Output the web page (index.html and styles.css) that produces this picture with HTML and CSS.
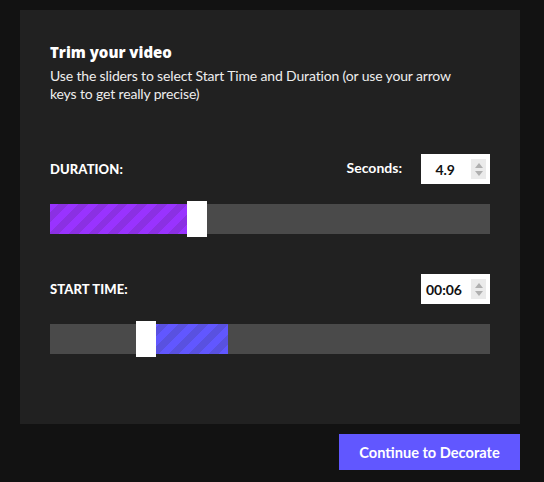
FILE: index.html
```html
<!DOCTYPE html>
<html>
<head>
<meta charset="utf-8">
<link rel="stylesheet" href="styles.css">
</head>
<body>
<div class="wrap">
  <div class="panel">
    <h1 class="title">Trim your video</h1>
    <p class="desc">Use the sliders to select Start Time and Duration (or use your arrow keys to get really precise)</p>

    <div class="section duration">
      <div class="head">
        <span class="label">DURATION:</span>
        <div class="controls">
          <span class="sub">Seconds:</span>
          <div class="num">
            <span class="val">4.9</span>
            <span class="spin"><i class="up"></i><i class="down"></i></span>
          </div>
        </div>
      </div>
      <div class="track">
        <div class="fill purple" style="left:0;width:137px"></div>
        <div class="thumb" style="left:137px"></div>
      </div>
    </div>

    <div class="section start">
      <div class="head">
        <span class="label">START TIME:</span>
        <div class="controls">
          <div class="num">
            <span class="val">00:06</span>
            <span class="spin"><i class="up"></i><i class="down"></i></span>
          </div>
        </div>
      </div>
      <div class="track">
        <div class="thumb" style="left:86px"></div>
        <div class="fill blue" style="left:106px;width:72px"></div>
      </div>
    </div>
  </div>
  <div class="actions">
    <button class="btn">Continue to Decorate</button>
  </div>
</div>
</body>
</html>
```
FILE: styles.css
```css
* { box-sizing: border-box; }
html, body { margin: 0; padding: 0; }
body {
  background: #121212;
  font-family: Lato, "Liberation Sans", sans-serif;
  color: #fff;
  width: 544px;
  height: 482px;
  overflow: hidden;
}
.wrap {
  padding: 10px 24px 0 20px;
}
.panel {
  background: #212121;
  width: 500px;
  height: 414px;
  padding: 32px 30px 0 30px;
}
.title {
  margin: 0;
  font-family: "Open Sans", Lato, sans-serif;
  font-size: 15px;
  line-height: 20px;
  font-weight: 800;
}
.desc {
  margin: 5px 0 0 0;
  max-width: 425px;
  font-size: 14px;
  line-height: 18px;
  letter-spacing: -0.15px;
  color: #eee;
}
.section { margin-top: 51px; }
.section.start { margin-top: 40px; }
.head {
  display: flex;
  justify-content: space-between;
  align-items: center;
  height: 30px;
}
.label {
  font-size: 13px;
  font-weight: 900;
  letter-spacing: 0.1px;
}
.controls {
  display: flex;
  align-items: center;
  gap: 19px;
}
.sub {
  font-size: 14px;
  font-weight: 700;
  position: relative;
  top: -2px;
}
.num {
  width: 69px;
  height: 30px;
  background: #fff;
  color: #111;
  display: flex;
  align-items: center;
  justify-content: flex-end;
  padding-right: 4px;
}
.val {
  font-size: 14px;
  font-weight: 700;
  margin-right: 16px;
}
.start .val { margin-right: 9px; }
.spin {
  width: 15px;
  height: 20px;
  background: #ebebeb;
  display: flex;
  flex-direction: column;
  align-items: center;
  justify-content: center;
  gap: 3px;
}
.spin i {
  width: 0;
  height: 0;
  border-left: 4px solid transparent;
  border-right: 4px solid transparent;
}
.spin .up { border-bottom: 5px solid #b0b0b0; }
.spin .down { border-top: 5px solid #b0b0b0; }
.track {
  position: relative;
  margin-top: 20px;
  width: 440px;
  height: 30px;
  background: #4a4a4a;
}
.fill {
  position: absolute;
  top: 0;
  height: 30px;
}
.fill.purple {
  background: repeating-linear-gradient(-45deg, #9933ff 0, #9933ff 7px, #8b30e3 7px, #8b30e3 14px);
}
.fill.blue {
  background: repeating-linear-gradient(-45deg, #6157ff 0, #6157ff 7px, #5951e0 7px, #5951e0 14px);
}
.thumb {
  position: absolute;
  top: -3px;
  width: 20px;
  height: 36px;
  background: #fff;
}
.actions {
  display: flex;
  justify-content: flex-end;
  width: 500px;
  margin-top: 10px;
}
.btn {
  width: 181px;
  height: 36px;
  border: 0;
  background: #6157ff;
  color: #fff;
  font-family: Lato, "Liberation Sans", sans-serif;
  font-size: 14.6px;
  font-weight: 700;
  padding: 0;
}
```
